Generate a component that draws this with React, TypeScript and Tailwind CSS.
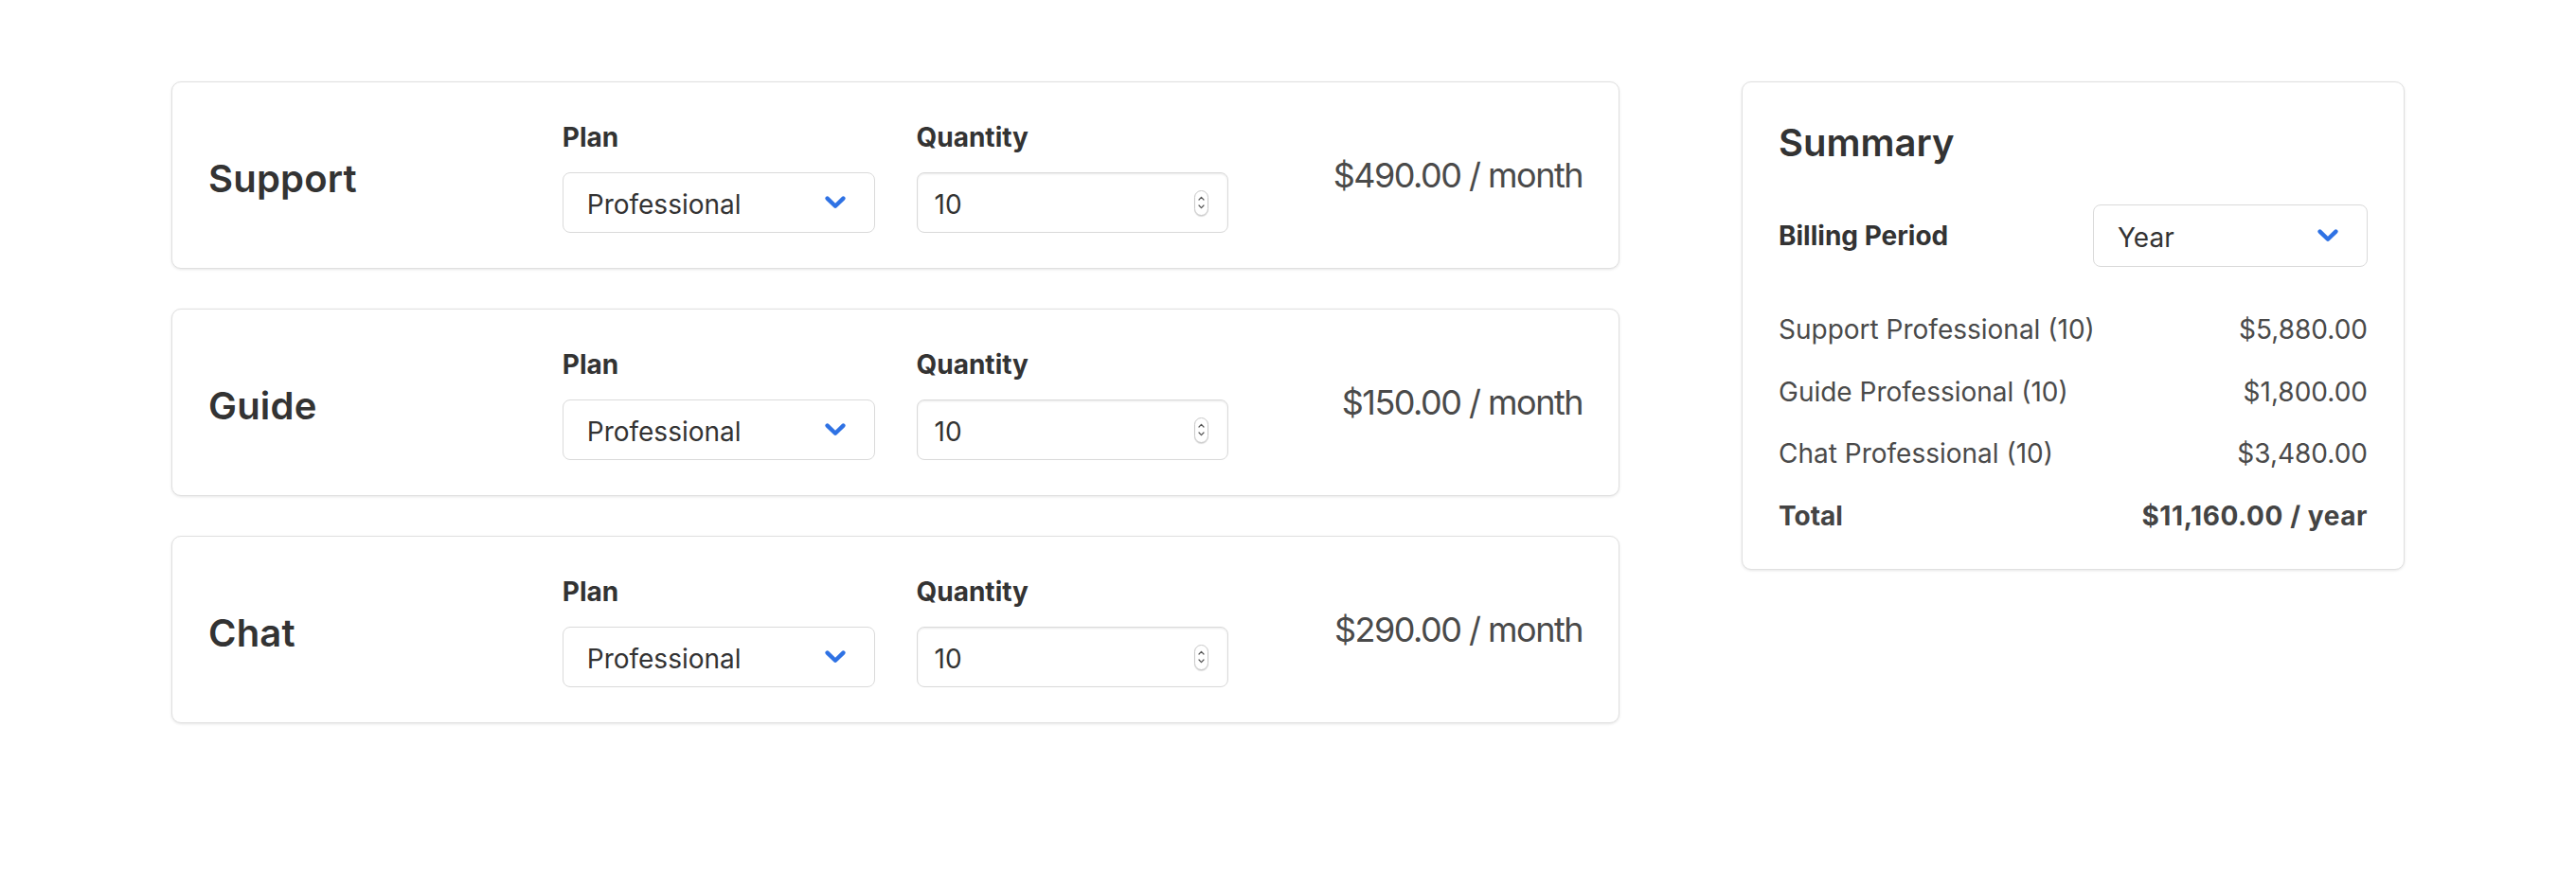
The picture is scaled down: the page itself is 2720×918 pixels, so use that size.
import React from "react";

function Chevron() {
  return (
    <svg width="22" height="14" viewBox="0 0 22 14" fill="none" aria-hidden="true">
      <path
        d="M2.6 2.6 L11 10.8 L19.4 2.6"
        stroke="#2f72e4"
        strokeWidth="4.4"
        strokeLinecap="round"
        strokeLinejoin="round"
      />
    </svg>
  );
}

function Stepper() {
  return (
    <div className="flex h-[27px] w-[15px] flex-col items-center justify-center gap-[4px] rounded-full border border-[#c9c9c9] bg-white shadow-[0_1px_1px_rgba(0,0,0,0.15)]">
      <svg width="7" height="5" viewBox="0 0 7 5" fill="none" aria-hidden="true">
        <path d="M1 4 L3.5 1.3 L6 4" stroke="#555" strokeWidth="1.2" strokeLinecap="round" strokeLinejoin="round" />
      </svg>
      <svg width="7" height="5" viewBox="0 0 7 5" fill="none" aria-hidden="true">
        <path d="M1 1 L3.5 3.7 L6 1" stroke="#555" strokeWidth="1.2" strokeLinecap="round" strokeLinejoin="round" />
      </svg>
    </div>
  );
}

function SelectBox({ value, className }: { value: string; className: string }) {
  return (
    <div
      className={
        "flex items-center justify-between rounded-[8px] border border-[#dadada] bg-white pl-[25px] pr-[30px] " +
        className
      }
    >
      <span className="pt-[3px] text-[28px] leading-[34px] text-[#333333]">{value}</span>
      <Chevron />
    </div>
  );
}

function ProductCard({ name, price }: { name: string; price: string }) {
  return (
    <div className="rounded-[10px] border border-[#e0e0e0] bg-white px-[38px] py-[37px] shadow-[0_1px_3px_rgba(0,0,0,0.1)]">
      <div className="grid grid-cols-4 items-center gap-x-[44px]">
        <div className="pt-[7px] text-[40px] font-semibold leading-[48px] tracking-[0.005em] text-[#333333]">{name}</div>
        <div className="flex flex-col gap-[16px]">
          <div className="text-[28px] font-bold leading-[42px] text-[#333333]">Plan</div>
          <SelectBox value="Professional" className="h-[64px]" />
        </div>
        <div className="flex flex-col gap-[16px]">
          <div className="text-[28px] font-bold leading-[42px] text-[#333333]">Quantity</div>
          <div className="flex h-[64px] items-center justify-between rounded-[8px] border border-[#dadada] bg-white pl-[18px] pr-[20px] shadow-[inset_0_1px_2px_rgba(0,0,0,0.09)]">
            <span className="pt-[3px] text-[28px] leading-[34px] text-[#333333]">10</span>
            <Stepper />
          </div>
        </div>
        <div className="text-right text-[36px] leading-[44px] tracking-[-0.042em] text-[#4a4a4a]">{price}</div>
      </div>
    </div>
  );
}

function SummaryRow({ label, value, bold }: { label: string; value: string; bold?: boolean }) {
  return (
    <div
      className={
        "flex items-center justify-between text-[28px] leading-[42px] " +
        (bold ? "font-bold text-[#444444]" : "text-[#4a4a4a]")
      }
    >
      <span>{label}</span>
      <span className={bold ? "tracking-[0.02em]" : ""}>{value}</span>
    </div>
  );
}

export default function App() {
  return (
    <div className="min-h-screen bg-white pt-[86px] font-['Inter','Noto_Sans',sans-serif]">
      <div className="mx-auto flex w-[2358px] items-start gap-[129px]">
        <div className="flex flex-1 flex-col gap-[42px]">
          <ProductCard name="Support" price="$490.00 / month" />
          <ProductCard name="Guide" price="$150.00 / month" />
          <ProductCard name="Chat" price="$290.00 / month" />
        </div>
        <div className="w-[700px] rounded-[10px] border border-[#e0e0e0] bg-white px-[38px] pb-[35px] pt-[40px] shadow-[0_1px_3px_rgba(0,0,0,0.1)]">
          <div className="text-[40px] font-semibold leading-[48px] text-[#333333]">Summary</div>
          <div className="mt-[41px] flex items-center justify-between">
            <div className="text-[28px] font-bold leading-[42px] text-[#333333]">Billing Period</div>
            <SelectBox value="Year" className="h-[66px] w-[290px]" />
          </div>
          <div className="mt-[45px] flex flex-col gap-[23.6px]">
            <SummaryRow label="Support Professional (10)" value="$5,880.00" />
            <SummaryRow label="Guide Professional (10)" value="$1,800.00" />
            <SummaryRow label="Chat Professional (10)" value="$3,480.00" />
            <SummaryRow label="Total" value="$11,160.00 / year" bold />
          </div>
        </div>
      </div>
    </div>
  );
}
